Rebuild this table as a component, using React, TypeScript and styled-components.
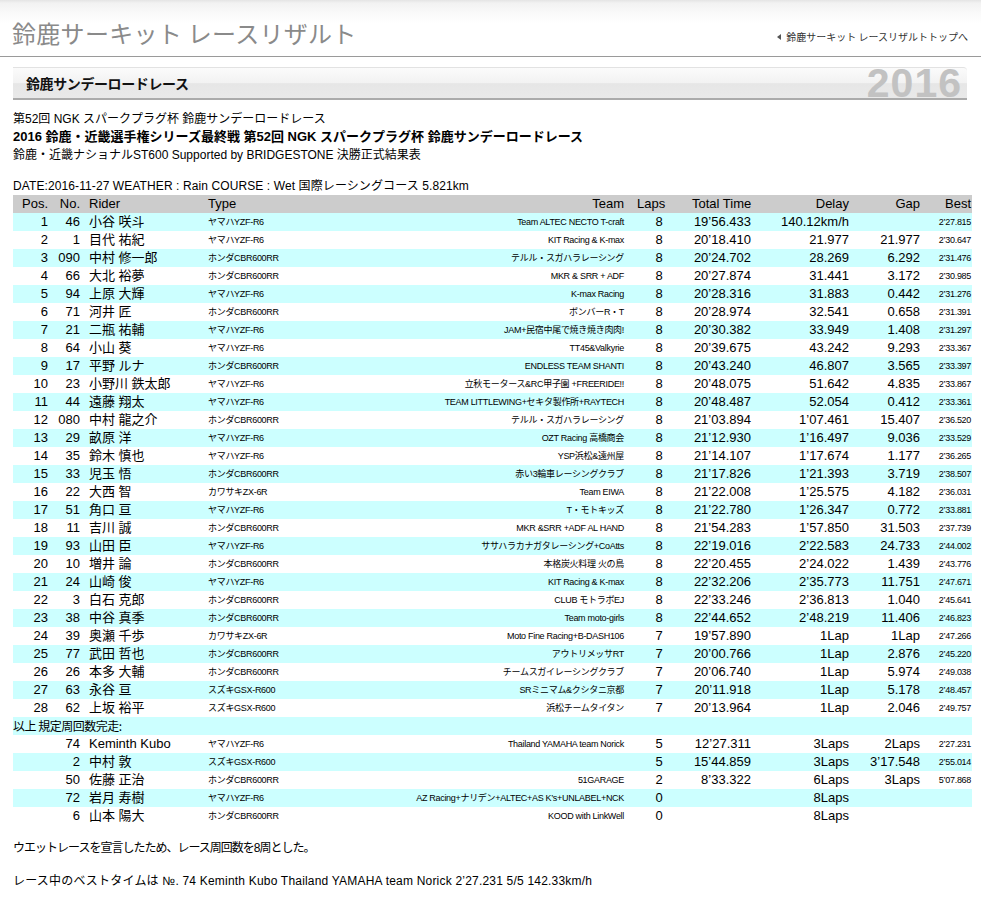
import React from 'react';
import styled, { createGlobalStyle } from 'styled-components';

const GlobalStyle = createGlobalStyle`
  body {
    margin: 0;
    background: #fff;
    color: #000;
    font-family: "Liberation Sans", "Noto Sans CJK JP", sans-serif;
  }
`;

const Header = styled.header`
  height: 56px;
  border-bottom: 1px solid #9a9a9a;
  background: linear-gradient(#e4e4e4 0, #f2f2f2 3px, #f9f9f9 12px, #fff 24px);
  display: flex;
  align-items: flex-end;
  justify-content: space-between;
  padding: 0 13px 0 12px;
`;

const SiteTitle = styled.h1`
  margin: 0 0 9px;
  font-family: "Noto Sans CJK JP", sans-serif;
  font-weight: 400;
  font-size: 24px;
  line-height: 28px;
  color: #8a8a8a;
  letter-spacing: 0.3px;
`;

const TopLink = styled.a`
  margin-bottom: 13px;
  font-family: "Noto Sans CJK JP", sans-serif;
  font-size: 10px;
  line-height: 12px;
  color: #333;
  text-decoration: none;
  display: flex;
  align-items: center;
  gap: 5px;
`;

const Arrow = styled.span`
  width: 0;
  height: 0;
  border-top: 3px solid transparent;
  border-bottom: 3px solid transparent;
  border-right: 4px solid #555;
`;

const Content = styled.main`
  padding: 0 9px 0 13px;
`;

const RaceBar = styled.div`
  margin: 10px 5px 0 0;
  height: 30px;
  border-top: 1px solid #e2e2e2;
  border-bottom: 2px solid #ababab;
  border-radius: 0 4px 0 0;
  background: linear-gradient(#fbfbfb 0%, #f2f2f2 50%, #e6e6e6 52%, #e9e9e9 100%);
  display: flex;
  align-items: center;
  justify-content: space-between;
  padding: 0 5px 0 13px;
`;

const RaceName = styled.h2`
  margin: 0;
  font-family: "Noto Sans CJK JP", sans-serif;
  font-size: 14px;
  font-weight: 700;
  color: #111;
  letter-spacing: -0.4px;
`;

const Year = styled.span`
  font-family: "Liberation Sans", sans-serif;
  font-weight: 700;
  font-size: 41px;
  line-height: 30px;
  color: #c2c2c2;
  letter-spacing: 1px;
`;

const Intro = styled.div`
  margin-top: 10px;
  font-size: 12px;
  line-height: 18px;
`;

const IntroLine = styled.div<{ $bold?: boolean }>`
  font-weight: ${({ $bold }) => ($bold ? 700 : 400)};
  font-size: ${({ $bold }) => ($bold ? '13px' : '12px')};
`;

const Conditions = styled.div`
  margin-top: 13px;
  font-size: 12px;
  line-height: 18px;
  letter-spacing: 0.1px;
`;

const Table = styled.table`
  width: 959px;
  border-collapse: collapse;
  table-layout: fixed;
  font-size: 13px;
`;

const HeadRow = styled.tr`
  background: #cccccc;
`;

const BodyRow = styled.tr`
  &:nth-child(odd) {
    background: #ccffff;
  }
`;

type Align = 'left' | 'right' | 'center';

const Th = styled.th<{ $align: Align; $pad?: string }>`
  height: 18px;
  padding: ${({ $pad }) => $pad || '0 4px'};
  font-weight: 400;
  text-align: ${({ $align }) => $align};
  white-space: nowrap;
  line-height: 18px;
`;

const Td = styled.td<{ $align: Align; $small?: boolean; $pad?: string }>`
  height: 18px;
  padding: ${({ $pad }) => $pad || '0 4px'};
  text-align: ${({ $align }) => $align};
  white-space: nowrap;
  overflow: hidden;
  line-height: 18px;
  font-size: ${({ $small }) => ($small ? '9px' : '13px')};
  letter-spacing: ${({ $small }) => ($small ? '-0.3px' : '0')};
`;

const NoteCell = styled.td`
  height: 18px;
  padding: 0;
  font-family: "Noto Sans CJK JP", sans-serif;
  font-size: 12px;
  line-height: 18px;
  letter-spacing: -0.5px;
`;

const Footnote = styled.p<{ $tight?: boolean }>`
  margin: 14px 0 0;
  font-size: 12px;
  line-height: 18px;
  letter-spacing: ${({ $tight }) => ($tight ? '-1px' : '0.2px')};
  & + & {
    margin-top: 15px;
  }
`;

type Row = [string, string, string, string, string, string, string, string, string, string];

const finishers: Row[] = [
  ['1', '46', '小谷 咲斗', 'ヤマハYZF-R6', 'Team ALTEC NECTO T-craft', '8', '19’56.433', '140.12km/h', '', '2’27.815'],
  ['2', '1', '目代 祐紀', 'ヤマハYZF-R6', 'KIT Racing & K-max', '8', '20’18.410', '21.977', '21.977', '2’30.647'],
  ['3', '090', '中村 修一郎', 'ホンダCBR600RR', 'テルル・スガハラレーシング', '8', '20’24.702', '28.269', '6.292', '2’31.476'],
  ['4', '66', '大北 裕夢', 'ホンダCBR600RR', 'MKR & SRR + ADF', '8', '20’27.874', '31.441', '3.172', '2’30.985'],
  ['5', '94', '上原 大輝', 'ヤマハYZF-R6', 'K-max Racing', '8', '20’28.316', '31.883', '0.442', '2’31.276'],
  ['6', '71', '河井 匠', 'ホンダCBR600RR', 'ボンバーR・T', '8', '20’28.974', '32.541', '0.658', '2’31.391'],
  ['7', '21', '二瓶 祐輔', 'ヤマハYZF-R6', 'JAM+民宿中尾で焼き焼き肉肉!', '8', '20’30.382', '33.949', '1.408', '2’31.297'],
  ['8', '64', '小山 葵', 'ヤマハYZF-R6', 'TT45&Valkyrie', '8', '20’39.675', '43.242', '9.293', '2’33.367'],
  ['9', '17', '平野 ルナ', 'ホンダCBR600RR', 'ENDLESS TEAM SHANTI', '8', '20’43.240', '46.807', '3.565', '2’33.397'],
  ['10', '23', '小野川 鉄太郎', 'ヤマハYZF-R6', '立秋モータース&RC甲子園 +FREERIDE!!', '8', '20’48.075', '51.642', '4.835', '2’33.867'],
  ['11', '44', '遠藤 翔太', 'ヤマハYZF-R6', 'TEAM LITTLEWING+セキタ製作所+RAYTECH', '8', '20’48.487', '52.054', '0.412', '2’33.361'],
  ['12', '080', '中村 龍之介', 'ホンダCBR600RR', 'テルル・スガハラレーシング', '8', '21’03.894', '1’07.461', '15.407', '2’36.520'],
  ['13', '29', '畝原 洋', 'ヤマハYZF-R6', 'OZT Racing 高橋商会', '8', '21’12.930', '1’16.497', '9.036', '2’33.529'],
  ['14', '35', '鈴木 慎也', 'ヤマハYZF-R6', 'YSP浜松&遠州屋', '8', '21’14.107', '1’17.674', '1.177', '2’36.265'],
  ['15', '33', '児玉 悟', 'ホンダCBR600RR', '赤い3輪車レーシングクラブ', '8', '21’17.826', '1’21.393', '3.719', '2’38.507'],
  ['16', '22', '大西 智', 'カワサキZX-6R', 'Team EIWA', '8', '21’22.008', '1’25.575', '4.182', '2’36.031'],
  ['17', '51', '角口 亘', 'ヤマハYZF-R6', 'T・モトキッズ', '8', '21’22.780', '1’26.347', '0.772', '2’33.881'],
  ['18', '11', '吉川 誠', 'ホンダCBR600RR', 'MKR &SRR +ADF AL HAND', '8', '21’54.283', '1’57.850', '31.503', '2’37.739'],
  ['19', '93', '山田 臣', 'ヤマハYZF-R6', 'ササハラカナガタレーシング+CoAtts', '8', '22’19.016', '2’22.583', '24.733', '2’44.002'],
  ['20', '10', '増井 論', 'ホンダCBR600RR', '本格炭火料理 火の鳥', '8', '22’20.455', '2’24.022', '1.439', '2’43.776'],
  ['21', '24', '山崎 俊', 'ヤマハYZF-R6', 'KIT Racing & K-max', '8', '22’32.206', '2’35.773', '11.751', '2’47.671'],
  ['22', '3', '白石 克郎', 'ホンダCBR600RR', 'CLUB モトラボEJ', '8', '22’33.246', '2’36.813', '1.040', '2’45.641'],
  ['23', '38', '中谷 真季', 'ホンダCBR600RR', 'Team moto-girls', '8', '22’44.652', '2’48.219', '11.406', '2’46.823'],
  ['24', '39', '奥瀬 千歩', 'カワサキZX-6R', 'Moto Fine Racing+B-DASH106', '7', '19’57.890', '1Lap', '1Lap', '2’47.266'],
  ['25', '77', '武田 哲也', 'ホンダCBR600RR', 'アウトリメッサRT', '7', '20’00.766', '1Lap', '2.876', '2’45.220'],
  ['26', '26', '本多 大輔', 'ホンダCBR600RR', 'チームスガイレーシングクラブ', '7', '20’06.740', '1Lap', '5.974', '2’49.038'],
  ['27', '63', '永谷 亘', 'スズキGSX-R600', 'SRミニマム&クシタニ京都', '7', '20’11.918', '1Lap', '5.178', '2’48.457'],
  ['28', '62', '上坂 裕平', 'スズキGSX-R600', '浜松チームタイタン', '7', '20’13.964', '1Lap', '2.046', '2’49.757'],
];

const nonClassified: Row[] = [
  ['', '74', 'Keminth Kubo', 'ヤマハYZF-R6', 'Thailand YAMAHA team Norick', '5', '12’27.311', '3Laps', '2Laps', '2’27.231'],
  ['', '2', '中村 敦', 'スズキGSX-R600', '', '5', '15’44.859', '3Laps', '3’17.548', '2’55.014'],
  ['', '50', '佐藤 正治', 'ホンダCBR600RR', '51GARAGE', '2', '8’33.322', '6Laps', '3Laps', '5’07.868'],
  ['', '72', '岩月 寿樹', 'ヤマハYZF-R6', 'AZ Racing+ナリデン+ALTEC+AS K’s+UNLABEL+NCK', '0', '', '8Laps', '', ''],
  ['', '6', '山本 陽大', 'ホンダCBR600RR', 'KOOD with LinkWell', '0', '', '8Laps', '', ''],
];

const colWidths = [39, 32, 120, 196, 228, 60, 67, 98, 71, 48];

const ResultRow: React.FC<{ row: Row }> = ({ row }) => {
  const [pos, no, rider, type, team, laps, total, delay, gap, best] = row;
  return (
    <BodyRow>
      <Td $align="right">{pos}</Td>
      <Td $align="right">{no}</Td>
      <Td $align="left" $pad="0 0 0 5px">{rider}</Td>
      <Td $align="left" $small>{type}</Td>
      <Td $align="right" $small>{team}</Td>
      <Td $align="center" $pad="0 0 0 2px">{laps}</Td>
      <Td $align="right">{total}</Td>
      <Td $align="right">{delay}</Td>
      <Td $align="right">{gap}</Td>
      <Td $align="right" $small $pad="0 1px 0 0">{best}</Td>
    </BodyRow>
  );
};

const App: React.FC = () => (
  <>
    <GlobalStyle />
    <Header>
      <SiteTitle>鈴鹿サーキット レースリザルト</SiteTitle>
      <TopLink href="#">
        <Arrow />
        鈴鹿サーキット レースリザルトトップへ
      </TopLink>
    </Header>
    <Content>
      <RaceBar>
        <RaceName>鈴鹿サンデーロードレース</RaceName>
        <Year>2016</Year>
      </RaceBar>
      <Intro>
        <IntroLine>第52回 NGK スパークプラグ杯 鈴鹿サンデーロードレース</IntroLine>
        <IntroLine $bold>2016 鈴鹿・近畿選手権シリーズ最終戦 第52回 NGK スパークプラグ杯 鈴鹿サンデーロードレース</IntroLine>
        <IntroLine>鈴鹿・近畿ナショナルST600 Supported by BRIDGESTONE 決勝正式結果表</IntroLine>
      </Intro>
      <Conditions>DATE:2016-11-27 WEATHER : Rain COURSE : Wet 国際レーシングコース 5.821km</Conditions>
      <Table>
        <colgroup>
          {colWidths.map((w, i) => (
            <col key={i} style={{ width: w }} />
          ))}
        </colgroup>
        <thead>
          <HeadRow>
            <Th $align="right">Pos.</Th>
            <Th $align="right">No.</Th>
            <Th $align="left" $pad="0 0 0 5px">Rider</Th>
            <Th $align="left">Type</Th>
            <Th $align="right">Team</Th>
            <Th $align="left" $pad="0 0 0 9px">Laps</Th>
            <Th $align="right">Total Time</Th>
            <Th $align="right">Delay</Th>
            <Th $align="right">Gap</Th>
            <Th $align="right" $pad="0 1px 0 0">Best</Th>
          </HeadRow>
        </thead>
        <tbody>
          {finishers.map((r) => (
            <ResultRow key={r[0]} row={r} />
          ))}
          <BodyRow>
            <NoteCell colSpan={10}>以上 規定周回数完走:</NoteCell>
          </BodyRow>
          {nonClassified.map((r) => (
            <ResultRow key={r[1]} row={r} />
          ))}
        </tbody>
      </Table>
      <Footnote $tight>ウエットレースを宣言したため、レース周回数を8周とした。</Footnote>
      <Footnote>レース中のベストタイムは №. 74 Keminth Kubo Thailand YAMAHA team Norick 2’27.231 5/5 142.33km/h</Footnote>
    </Content>
  </>
);

export default App;
